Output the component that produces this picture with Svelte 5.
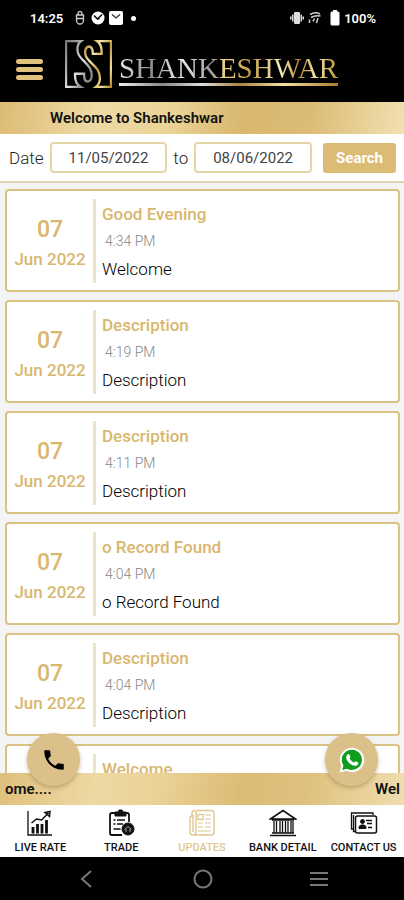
<script lang="ts">
  interface Update {
    day: string;
    month: string;
    title: string;
    time: string;
    text: string;
  }

  const updates: Update[] = [
    { day: '07', month: 'Jun 2022', title: 'Good Evening', time: '4:34 PM', text: 'Welcome' },
    { day: '07', month: 'Jun 2022', title: 'Description', time: '4:19 PM', text: 'Description' },
    { day: '07', month: 'Jun 2022', title: 'Description', time: '4:11 PM', text: 'Description' },
    { day: '07', month: 'Jun 2022', title: 'o Record Found', time: '4:04 PM', text: 'o Record Found' },
    { day: '07', month: 'Jun 2022', title: 'Description', time: '4:04 PM', text: 'Description' },
    { day: '', month: '', title: 'Welcome', time: '', text: '' }
  ];

  const tabs = [
    { id: 'rate', label: 'LIVE RATE' },
    { id: 'trade', label: 'TRADE' },
    { id: 'updates', label: 'UPDATES' },
    { id: 'bank', label: 'BANK DETAIL' },
    { id: 'contact', label: 'CONTACT US' }
  ];

  let fromDate = $state('11/05/2022');
  let toDate = $state('08/06/2022');
  let activeTab = $state('updates');
</script>

<div class="app">
  <div class="status">
    <span class="status__time">14:25</span>
    <svg class="status__icon" viewBox="0 0 14 14" fill="none" stroke="#ccc" stroke-width="1.3">
      <path d="M5 4V2.500a2 2 0 0 1 4 0V4M3.500 4h7v5.500a3.500 3.500 0 0 1-7 0zM3.500 7.500h7" />
    </svg>
    <svg class="status__icon" viewBox="0 0 14 14">
      <circle cx="7" cy="7" r="6.500" fill="#fff" />
      <path d="M3 4.500l3.500 3.500L11 3.500M6.500 8l2-.5" fill="none" stroke="#000" stroke-width="1.500" />
    </svg>
    <svg class="status__icon status__icon--last" viewBox="0 0 14 14">
      <rect width="14" height="14" rx="2" fill="#fff" />
      <path d="M3 3.500l4 3.500 4-3.500" fill="none" stroke="#333" stroke-width="1.300" />
    </svg>
    <span class="status__dot"></span>
    <span class="status__space"></span>
    <svg class="status__icon" viewBox="0 0 14 14" fill="#ddd">
      <rect x="4" y="1" width="6" height="12" rx="1" />
      <path d="M2 3.500h1.500v7H2zM0 5.500h1.500v3H0zM10.500 3.500H12v7h-1.500zM12.500 5.500H14v3h-1.500z" />
    </svg>
    <svg class="status__icon status__icon--last" viewBox="0 0 14 14" fill="none" stroke="#ccc" stroke-width="1.500">
      <path d="M2 3.500Q7 .5 12 3M3 6.500Q7 4 12.500 5M1.500 12V8.500M5 10.500l1.500-3M8.500 12l1.500-5" />
    </svg>
    <svg class="status__battery" viewBox="0 0 10 16" fill="#fff">
      <rect x="3" width="4" height="3" /><rect x="0.500" y="1.500" width="9" height="14" rx="1.500" />
    </svg>
    <span class="status__percent">100%</span>
  </div>

  <header class="header">
    <button class="menu" aria-label="Menu">
      <span></span><span></span><span></span>
    </button>
    <svg class="logo" viewBox="195 119 140 142" fill="none" stroke-width="7">
      <defs>
        <linearGradient id="silver" x1="0" y1="0" x2="1" y2="1">
          <stop offset="0" stop-color="#777" /><stop offset="0.3" stop-color="#aaa" />
          <stop offset="0.55" stop-color="#e2e2e2" /><stop offset="0.75" stop-color="#999" />
          <stop offset="1" stop-color="#777" />
        </linearGradient>
        <linearGradient id="gold" x1="0" y1="0" x2="1" y2="1">
          <stop offset="0" stop-color="#a77b25" /><stop offset="0.3" stop-color="#f7e8a6" />
          <stop offset="0.55" stop-color="#c4983f" /><stop offset="0.8" stop-color="#f1df9a" />
          <stop offset="1" stop-color="#b88832" />
        </linearGradient>
      </defs>
      <path stroke="url(#silver)" d="M198 122H242C232 129 230 145 234 158C239 174 258 184 269 202C278 217 276 240 264 242C252 243 252 230 252 219H225C224 237 227 250 241 258H198Z" />
      <path stroke="url(#gold)" d="M332 122H291C303 130 305 145 304 160H278C278 148 276 138 266 138C255 139 253 154 257 166C263 181 283 193 292 207C302 224 302 247 287 258H332Z" />
    </svg>
    <h1 class="brand">SHANKESHWAR</h1>
  </header>

  <div class="ticker ticker--top">Welcome to Shankeshwar</div>

  <form class="filter" onsubmit={(e) => e.preventDefault()}>
    <label for="from">Date</label>
    <input id="from" type="text" bind:value={fromDate} />
    <label for="to">to</label>
    <input id="to" type="text" bind:value={toDate} />
    <button class="filter__search" type="submit">Search</button>
  </form>

  <main class="list">
    {#each updates as item}
      <article class="card">
        <div class="card__date">
          <span class="card__day">{item.day}</span>
          <span class="card__month">{item.month}</span>
        </div>
        <div class="card__body">
          <h2 class="card__title">{item.title}</h2>
          <time class="card__time">{item.time}</time>
          <p class="card__text">{item.text}</p>
        </div>
      </article>
    {/each}
  </main>

  <div class="ticker ticker--bottom">
    <span>ome....</span>
    <span>Wel</span>
    <button class="fab fab--call" aria-label="Call">
      <svg viewBox="0 0 24 24" width="26" height="26">
        <path d="M6.620 10.790c1.440 2.830 3.760 5.140 6.590 6.590l2.200-2.200c.27-.27.67-.36 1.020-.24 1.120.37 2.330.57 3.570.57.55 0 1 .45 1 1V20c0 .55-.45 1-1 1-9.390 0-17-7.610-17-17 0-.55.45-1 1-1h3.500c.55 0 1 .45 1 1 0 1.250.2 2.450.57 3.570.11.35.03.74-.25 1.020z" />
      </svg>
    </button>
    <button class="fab fab--chat" aria-label="WhatsApp">
      <svg viewBox="0 0 24 24" width="26" height="26">
        <path fill="#fff" d="M.5 23.500l1.700-6A11.300 11.300 0 1 1 6.700 21.900z" />
        <path fill="#109d1d" d="M2.900 21.200l1.200-4.200A9.300 9.300 0 1 1 7.400 20z" />
        <path fill="#fff" d="M8.300 6.600c.5-.3 1-.2 1.200.2l1 2.200c.2.500-.9 1.300-.7 1.700.9 1.700 2.100 2.800 3.900 3.600.5.200 1.200-1.300 1.700-1.100l2.200 1.100c.9.500-.4 2.500-1.400 2.900-3.800 1.300-9.700-3.800-9.500-7.700 0-1.200.7-2.400 1.600-2.900z" />
      </svg>
    </button>
  </div>

  <nav class="tabs">
    {#each tabs as tab}
      <button class="tab" class:tab--active={tab.id === activeTab} onclick={() => (activeTab = tab.id)}>
        <svg viewBox="0 0 28 28" width="28" height="28" fill="none" stroke="currentColor">
          {#if tab.id === 'rate'}
            <path d="M2 2v24h24" stroke-width="1.300" />
            <path d="M7 18v6.500M11.500 15v9.500M16 15v9.500M20.500 11v13.500" stroke-width="2.800" />
            <path d="M5.500 14l5-4 5 1 7-7M19 3.500l5-1-.5 5z" stroke-width="1.500" />
          {:else if tab.id === 'trade'}
            <path d="M8 4H5q-2 0-2 2v18q0 2 2 2h10M18 4h2q2 0 2 2v7" stroke-width="1.800" />
            <path d="M8 3h3l1-2h3l1 2h3v4H8z" fill="currentColor" />
            <path d="M6.500 11h2M10 11h8M6.500 15h2M10 15h6M6.500 20h7" stroke-width="1.600" />
            <circle cx="21" cy="20" r="6" fill="currentColor" />
            <path d="M17.500 20.500l3.500-3 3.500 3M19 20v3M23 20v3" stroke="#aaa" />
          {:else if tab.id === 'updates'}
            <path d="M8 1.500h15a3 3 0 0 1 3 3V23a3 3 0 0 1-3 3H5a3 3 0 0 1-3-3V8l2-1V4a3 3 0 0 1 3-2.500M5 6v17M8 2v21a3 3 0 0 1-3 3" stroke-width="1.400" />
            <rect x="10" y="5.500" width="5" height="5" stroke-width="1.300" />
            <path d="M17 6h6M17 10h6M10 14h5M17 14h6M10 18h5M17 18h6M10 22h13" />
          {:else if tab.id === 'bank'}
            <path d="M1.500 10L14 1.500 26.500 10zM3 11h22M3 24h22M1 26.500h26" stroke-width="1.600" />
            <path d="M5 12v12M7.500 12v12M11 12v12M13.500 12v12M16.500 12v12M19 12v12M22 12v12M24 12v12" stroke-width="1.300" />
          {:else}
            <path d="M3 20H1.500V4H23v2M5 22.500H3.500V6" stroke-width="1.300" />
            <rect x="5.500" y="7" width="21" height="17" rx="2" stroke-width="1.500" />
            <circle cx="12.500" cy="12.500" r="2" fill="currentColor" />
            <path d="M9 19.500v-2l2-1.500h3l2 1.500v2z" fill="currentColor" />
            <path d="M16 11.500h6M17 14.500h5M18 18.500h4" stroke-width="1.600" />
          {/if}
        </svg>
        <span>{tab.label}</span>
      </button>
    {/each}
  </nav>

  <div class="system">
    <button aria-label="Back">
      <svg viewBox="0 0 20 20" width="20" height="20"><path d="M14 2L5 10l9 8" /></svg>
    </button>
    <button aria-label="Home">
      <svg viewBox="0 0 20 20" width="20" height="20"><circle cx="10" cy="10" r="8.500" /></svg>
    </button>
    <button aria-label="Recent apps">
      <svg viewBox="0 0 20 20" width="20" height="20"><path d="M1 4h18M1 10h18M1 16h18" /></svg>
    </button>
  </div>
</div>

<style>
  :global(body) {
    margin: 0;
    background: #000;
  }

  .app {
    display: flex;
    flex-direction: column;
    height: 100vh;
    overflow: hidden;
    font-family: Roboto, sans-serif;
    color: #222;
    background: #f5f4f4;
  }

  .app * {
    box-sizing: border-box;
  }

  button {
    padding: 0;
    border: 0;
    background: none;
    font-family: inherit;
    color: inherit;
  }

  .status {
    display: flex;
    align-items: center;
    gap: 4px;
    height: 36px;
    padding: 0 28px 0 30px;
    background: #000;
    color: #fff;
    font-size: 13px;
    font-weight: 600;
  }

  .status__time {
    margin-right: 6px;
  }

  .status__icon {
    width: 14px;
    height: 14px;
  }

  .status__icon--last {
    margin-right: 4px;
  }

  .status__dot {
    width: 5px;
    height: 5px;
    border-radius: 50%;
    background: #fff;
  }

  .status__space {
    flex: 1;
  }

  .status__battery {
    width: 10px;
    height: 16px;
  }

  .header {
    display: flex;
    align-items: center;
    height: 66px;
    padding: 0 16px 10px;
    background: #000;
  }

  .menu {
    display: flex;
    flex-direction: column;
    gap: 3px;
    width: 27px;
    margin: 10px 22px 0 0;
  }

  .menu span {
    height: 5px;
    border-radius: 3px;
    background: #dfc17c;
  }

  .logo {
    width: 47px;
    height: 48px;
  }

  .brand {
    position: relative;
    margin: 10px 0 0 7px;
    padding-bottom: 2px;
    font-family: "Liberation Serif", serif;
    font-size: 29px;
    line-height: 31px;
    font-weight: 400;
    color: transparent;
    background: linear-gradient(90deg, #eee 0%, #888 14%, #eee 28%, #999 42%, #e9d489 48%, #c39a45 60%, #f8edc0 74%, #b88932 82%, #f6e7aa 90%, #bd8d38 100%);
    background-clip: text;
  }

  .brand::after {
    content: "";
    position: absolute;
    left: 0;
    right: 0;
    bottom: 0;
    height: 3px;
    background: linear-gradient(90deg, #eee 0%, #888 20%, #ddd 38%, #a8823a 55%, #f3e0a0 75%, #a97d2c 100%);
  }

  .ticker {
    display: flex;
    align-items: center;
    height: 32px;
    font-size: 15px;
    font-weight: 600;
    color: #111;
    white-space: nowrap;
  }

  .ticker--top {
    padding: 0 50px;
    background: linear-gradient(100deg, #dcbb74 0%, #efdaa5 24%, #ebd398 42%, #d9b76e 60%, #dbbb75 76%, #f2e0b2 100%);
  }

  .ticker--bottom {
    position: relative;
    justify-content: space-between;
    padding: 0 4px 0 5px;
    background: linear-gradient(100deg, #dfc07c 0%, #eed9a4 24%, #ead196 40%, #dcbb74 60%, #dfc17f 76%, #f0deb0 100%);
  }

  .filter {
    display: flex;
    align-items: center;
    height: 49px;
    padding: 0 8px 0 9px;
    border-bottom: 2px solid #e0d3b2;
    background: #fff;
    font-size: 17px;
    font-weight: 300;
  }

  .filter input {
    flex: 1;
    min-width: 0;
    height: 31px;
    margin: 0 6px;
    padding: 0;
    border: 2px solid #e5d6a8;
    border-radius: 4px;
    background: #fff;
    font-family: inherit;
    font-size: 15px;
    font-weight: 400;
    text-align: center;
    color: #444;
  }

  .filter__search {
    width: 73px;
    height: 30px;
    margin-left: 5px;
    border-radius: 3px;
    background: #dcbb74;
    font-size: 15px;
    font-weight: 700;
    color: #fff;
  }

  .list {
    flex: 1;
    min-height: 0;
    overflow: hidden;
    padding: 6px 4px 0 5px;
  }

  .card {
    display: flex;
    height: 103px;
    margin-bottom: 8px;
    padding: 8px 0 7px;
    border: 2px solid #dac184;
    border-radius: 4px;
    background: #fff;
  }

  .card__date {
    display: flex;
    flex-direction: column;
    align-items: center;
    width: 89px;
    padding-top: 16px;
    border-right: 3px solid #eee4c4;
    font-weight: 500;
    color: #d8b76e;
  }

  .card__day {
    font-size: 23px;
    line-height: 30px;
  }

  .card__month {
    font-size: 17px;
    line-height: 28px;
  }

  .card__body {
    display: flex;
    flex-direction: column;
    padding-left: 6px;
  }

  .card__title {
    margin: 0;
    padding-top: 2px;
    font-size: 17px;
    line-height: 27px;
    font-weight: 500;
    color: #d8b76e;
  }

  .card__time {
    padding-left: 3px;
    font-size: 14px;
    line-height: 27px;
    font-weight: 300;
    color: #888;
  }

  .card__text {
    margin: 0;
    font-size: 17px;
    line-height: 28px;
    font-weight: 300;
    color: #000;
  }

  .fab {
    position: absolute;
    top: -40px;
    display: flex;
    align-items: center;
    justify-content: center;
    width: 53px;
    height: 53px;
    border-radius: 50%;
    background: #dbc08a;
    box-shadow: 0 2px 4px rgba(80, 60, 20, 0.3);
  }

  .fab--call {
    left: 27px;
  }

  .fab--chat {
    right: 26px;
  }

  .tabs {
    display: grid;
    grid-template-columns: repeat(5, 1fr);
    height: 52px;
    background: #fff;
  }

  .tab {
    display: flex;
    flex-direction: column;
    align-items: center;
    padding-top: 4px;
    font-size: 11px;
    line-height: 21px;
    font-weight: 500;
    color: #111;
    white-space: nowrap;
  }

  .tab--active {
    color: #dfc78f;
  }

  .system {
    display: flex;
    justify-content: space-between;
    align-items: center;
    height: 43px;
    padding: 0 75px 0 77px;
    background: #000;
  }

  .system svg {
    display: block;
    fill: none;
    stroke: #777;
    stroke-width: 2;
  }
</style>
